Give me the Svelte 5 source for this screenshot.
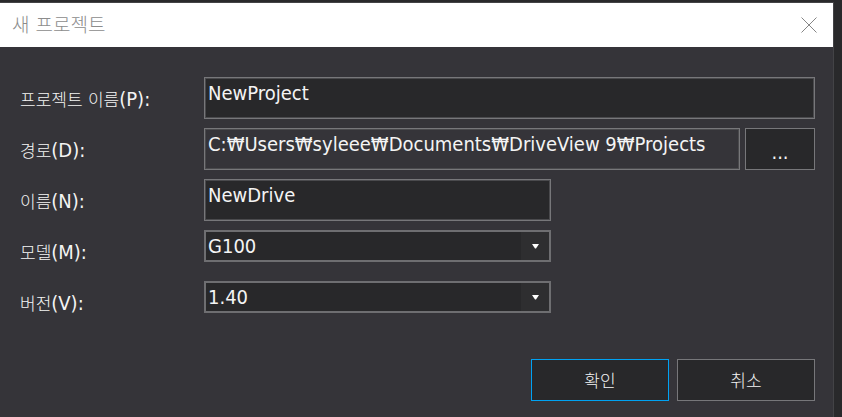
<script>
  let projectName = $state('NewProject');
  let path = $state('C:₩Users₩syleee₩Documents₩DriveView 9₩Projects');
  let driveName = $state('NewDrive');
  let model = $state('G100');
  let version = $state('1.40');
</script>

{#snippet caption(text, key)}
  <span class="ko">{text}</span><span class="key">({key}):</span>
{/snippet}

{#snippet arrow()}
  <span class="arrow" aria-hidden="true">
    <svg width="7" height="5" viewBox="0 0 7 5"><path d="M0 0H7L4 4.5H3Z" fill="#fff" /></svg>
  </span>
{/snippet}

<div class="backdrop">
  <form class="dialog" onsubmit={(e) => e.preventDefault()}>
    <header>
      <h1>새 프로젝트</h1>
      <button type="button" class="close" aria-label="닫기">
        <svg width="16" height="16" viewBox="0 0 16 16"><path d="M.5 .5L15.5 15.5M15.5 .5L.5 15.5" stroke="#858585" fill="none" /></svg>
      </button>
    </header>

    <main>
      <div class="row">
        <label for="project">{@render caption('프로젝트 이름', 'P')}</label>
        <div class="field"><input id="project" bind:value={projectName} /></div>
      </div>
      <div class="row">
        <label for="path">{@render caption('경로', 'D')}</label>
        <div class="field">
          <input id="path" class="readonly" readonly value={path} />
          <button type="button" class="browse">...</button>
        </div>
      </div>
      <div class="row">
        <label for="drive">{@render caption('이름', 'N')}</label>
        <div class="field short"><input id="drive" bind:value={driveName} /></div>
      </div>
      <div class="row">
        <label for="model">{@render caption('모델', 'M')}</label>
        <div class="field short">
          <select id="model" bind:value={model}><option>G100</option></select>
          {@render arrow()}
        </div>
      </div>
      <div class="row">
        <label for="version">{@render caption('버전', 'V')}</label>
        <div class="field short">
          <select id="version" bind:value={version}><option>1.40</option></select>
          {@render arrow()}
        </div>
      </div>
    </main>

    <footer>
      <button type="submit" class="primary">확인</button>
      <button type="button">취소</button>
    </footer>
  </form>
</div>

<style>
  :global(body) {
    background: #29292b;
  }
  .backdrop {
    box-sizing: border-box;
    min-height: 100vh;
    padding: 2px 8px 0 0;
    display: flex;
    background: #29292b;
    font-family: 'DejaVu Sans Condensed', 'Noto Sans CJK KR', sans-serif;
    font-size: 20px;
    color: #f4f4f4;
  }
  .dialog {
    flex: 1;
    min-width: 0;
    background: #353439;
    border-top: 1px solid #434346;
    border-right: 1px solid #434346;
  }
  header {
    display: flex;
    align-items: center;
    justify-content: space-between;
    height: 44px;
    padding: 0 16px 0 12px;
    background: #fff;
  }
  h1 {
    margin: 0;
    font: 300 19px/30px 'DejaVu Sans', 'Noto Sans CJK KR', sans-serif;
    color: #8c8c8c;
  }
  button,
  input,
  select {
    box-sizing: border-box;
    margin: 0;
    border: 1px solid #77777a;
    border-radius: 0;
    background: #28282a;
    color: inherit;
    font: inherit;
    outline: none;
  }
  .close {
    display: flex;
    padding: 0;
    border: 0;
    background: none;
  }
  main {
    padding: 30px 18px 0 20px;
    display: grid;
    gap: 9px;
  }
  .row {
    display: grid;
    grid-template-columns: 184px 1fr;
    height: 42px;
  }
  label {
    display: flex;
    align-items: baseline;
    line-height: 24px;
    padding-top: 10px;
    white-space: nowrap;
  }
  .ko {
    font: 300 17px/24px 'DejaVu Sans', 'Noto Sans CJK KR', sans-serif;
  }
  .field {
    display: flex;
    align-items: flex-start;
    gap: 5px;
    min-width: 0;
    position: relative;
  }
  .field.short {
    max-width: 347px;
  }
  input {
    flex: 1;
    min-width: 0;
    height: 42px;
    padding: 2px 3px 12px;
    box-shadow: inset 0 0 0 1px #4a4a4d;
  }
  input.readonly {
    background: #353439;
  }
  .browse {
    width: 70px;
    height: 42px;
    padding: 6px 0 0;
  }
  select {
    flex: 1;
    height: 32px;
    padding: 0 30px 0 2px;
    border: 2px solid #6e6e71;
    appearance: none;
  }
  .arrow {
    position: absolute;
    top: 2px;
    right: 2px;
    width: 28px;
    height: 28px;
    display: flex;
    align-items: center;
    justify-content: center;
    background: #2e2e30;
    pointer-events: none;
  }
  footer {
    display: flex;
    justify-content: flex-end;
    gap: 8px;
    padding: 36px 18px 16px;
  }
  footer button {
    width: 138px;
    height: 42px;
    padding: 0;
    font: 300 17px/24px 'Noto Sans CJK KR', sans-serif;
  }
  footer .primary {
    border-color: #00a2f3;
  }
</style>
